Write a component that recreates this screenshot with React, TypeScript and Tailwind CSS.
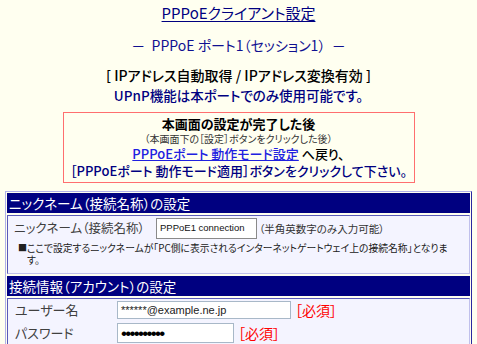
import React from 'react';

const jp = "font-['Noto_Sans_CJK_JP','Noto_Sans',sans-serif] [font-feature-settings:'palt']";

const Header: React.FC<{ title: string }> = ({ title }) => (
  <div className="bg-[#000080] h-[20px] px-[2px] text-[13.5px] leading-[20px] text-white whitespace-nowrap">{title}</div>
);

const App: React.FC = () => {
  return (
    <div className={`min-h-screen bg-[#fffff0] text-[#000000] ${jp}`}>
      <div className="flex flex-col items-center pt-[4px]">
        <a href="#" className="text-[15px] leading-[18px] text-[#000080] underline underline-offset-2">
          PPPoEクライアント設定
        </a>
        <div className="mt-[14px] text-[14px] leading-[18px] text-[#101090] whitespace-pre">
          －  PPPoE ポート1（セッション1）  －
        </div>
        <div className="mt-[12px] text-[14px] leading-[18px] font-medium whitespace-pre">
          [ IPアドレス自動取得 / IPアドレス変換有効 ]
        </div>
        <div className="mt-[2px] text-[13.5px] leading-[18px] font-medium text-[#000080] whitespace-nowrap">
          UPnP機能は本ポートでのみ使用可能です。
        </div>

        <div className="mt-[8px] w-[352px] border border-[#ff6f6f] flex flex-col items-center pt-[3px] pb-[3px] whitespace-nowrap">
          <div className="text-[13px] leading-[16px] font-bold">本画面の設定が完了した後</div>
          <div className="text-[10px] leading-[14px] text-[#333333]">（本画面下の［設定］ボタンをクリックした後）</div>
          <div className="text-[13px] leading-[16px] font-medium">
            <a href="#" className="text-[#2020e0] underline">PPPoEポート 動作モード設定</a>
            <span> へ戻り、</span>
          </div>
          <div className="mt-[1px] text-[13px] leading-[16px] font-medium text-[#000080]">
            ［PPPoEポート 動作モード適用］ボタンをクリックして下さい。
          </div>
        </div>
      </div>

      <div className="mx-[5px] mt-[8px] border border-t-[#b0b0e8] border-l-[#b0b0e8] border-r-[#2a2aa0] border-b-[#2a2aa0] p-[1px] flex flex-col gap-[2px]">
        <Header title="ニックネーム（接続名称）の設定" />
        <div className="border border-t-[#5a5ab8] border-l-[#5a5ab8] border-r-[#c0c0ec] border-b-[#c0c0ec] bg-[#f4f4ff] h-[59px] pt-[2px]">
          <div className="flex items-center h-[21px] whitespace-nowrap">
            <span className="w-[148px] pl-[6px] text-[12.5px] text-[#404040]">ニックネーム（接続名称）</span>
            <div className="w-[101px] h-[21px] border border-[#8a8a8a] bg-white flex items-center pl-[3px] font-['Liberation_Sans',sans-serif] text-[9.5px] text-[#111]">
              PPPoE1 connection
            </div>
            <span className="ml-[2px] text-[10.5px] text-[#333]">（半角英数字のみ入力可能）</span>
          </div>
          <div className="flex mt-[3px] pl-[10px] pr-[4px] text-[9.8px] leading-[12px] text-[#202020]">
            <span className="shrink-0 text-[9px]">■</span>
            <div className="flex flex-col">
              <span className="whitespace-nowrap">ここで設定するニックネームが「PC側に表示されるインターネットゲートウェイ上の接続名称」となりま</span>
              <span>す。</span>
            </div>
          </div>
        </div>
        <Header title="接続情報（アカウント）の設定" />
        <div className="border border-t-[#5a5ab8] border-l-[#5a5ab8] border-r-[#c0c0ec] bg-[#f4f4ff] pt-[2px] pb-[30px] flex flex-col gap-[4px] whitespace-nowrap">
          <div className="flex items-center h-[18px]">
            <span className="w-[109px] pl-[7px] text-[13px] text-[#404040]">ユーザー名</span>
            <div className="w-[174px] h-[18px] border border-[#a8b8c8] bg-white flex items-center pl-[3px] font-['Liberation_Sans',sans-serif] text-[11px] text-[#222]">
              ******@example.ne.jp
            </div>
            <span className="ml-[4px] text-[14px] text-[#ff0000]">［必須］</span>
          </div>
          <div className="flex items-center h-[20px]">
            <span className="w-[109px] pl-[7px] text-[13px] text-[#404040]">パスワード</span>
            <div className="w-[117px] h-[20px] border border-[#a8b8c8] bg-white flex items-center pl-[3px] font-['Liberation_Sans',sans-serif] text-[17px] leading-none tracking-[-1.7px] text-black">
              ••••••••••
            </div>
            <span className="ml-[4px] text-[14px] text-[#ff0000]">［必須］</span>
          </div>
        </div>
      </div>
    </div>
  );
};

export default App;
